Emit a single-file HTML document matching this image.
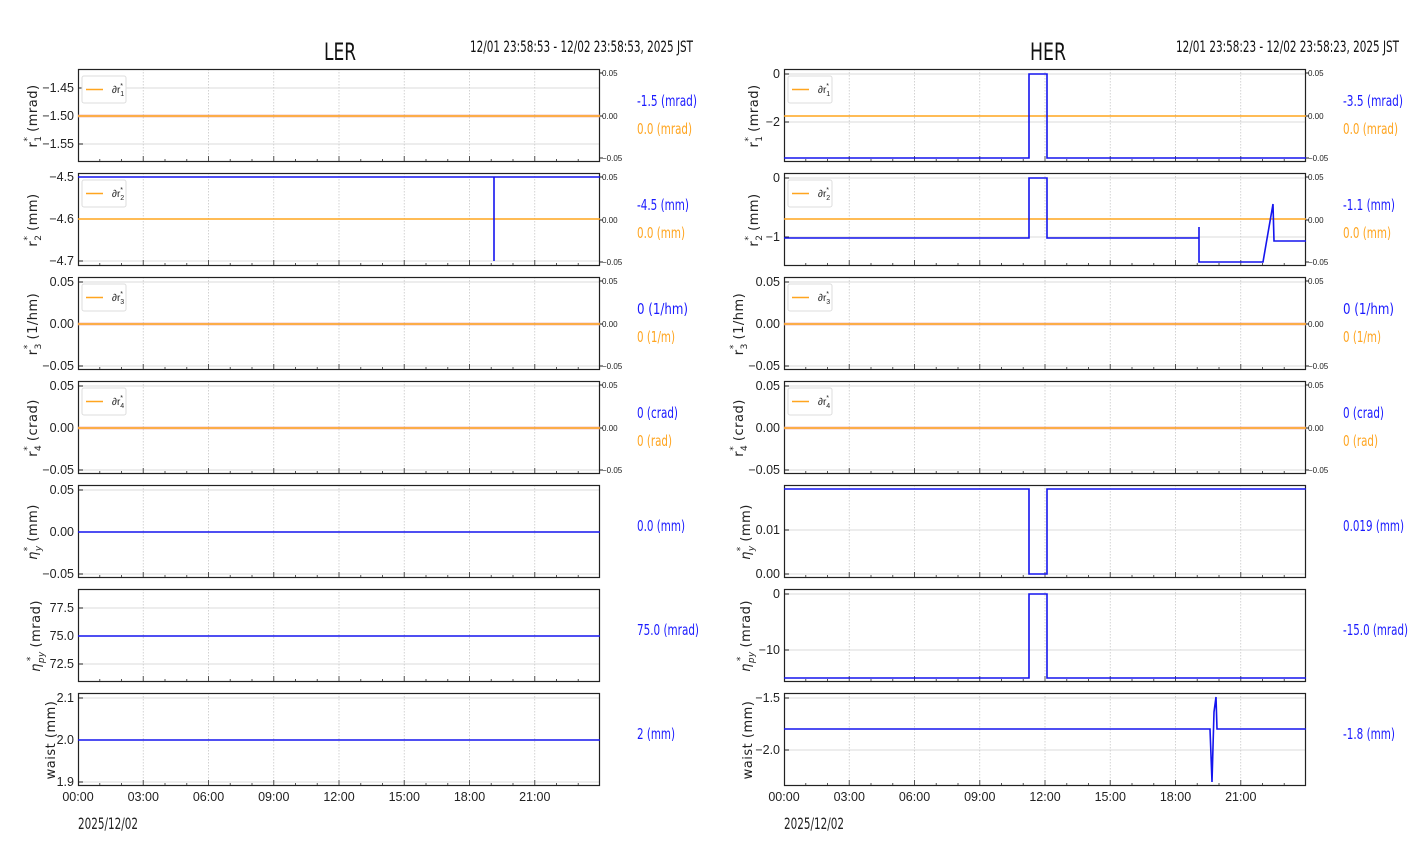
<!DOCTYPE html>
<html><head><meta charset="utf-8"><style>
html,body{margin:0;padding:0;background:#fff;}
svg{display:block;font-family:"DejaVu Sans","Liberation Sans",sans-serif;}
.t{font-size:12.5px;fill:#222;font-family:"Liberation Sans",sans-serif;}
.r{font-size:8px;fill:#222;font-family:"Liberation Sans",sans-serif;}
.yl{font-size:13px;fill:#222;letter-spacing:0.5px;}
.v{font-size:15px;}
.b{fill:#1a1aff;} .o{fill:#ffa520;}
.bl{stroke:#1515ee;stroke-width:1.6;fill:none;}
.ol{stroke:#ffa51f;stroke-width:1.6;fill:none;}
.hg{stroke:#cfcfcf;stroke-width:0.8;}
.lg{font-size:10px;fill:#222;font-family:"Liberation Sans",sans-serif;}
</style></head><body>
<svg width="1412" height="864" viewBox="0 0 1412 864" xmlns="http://www.w3.org/2000/svg">
<defs>
<g id="fr">
<path d="M65.25 0V93M130.5 0V93M195.75 0V93M261 0V93M326.25 0V93M391.5 0V93M456.75 0V93" stroke="#c8c8c8" stroke-width="0.8" stroke-dasharray="1.5,1.5"/>
<path d="M21.75 93v-3M43.5 93v-3M65.25 93v-6M87 93v-3M108.75 93v-3M130.5 93v-6M152.25 93v-3M174 93v-3M195.75 93v-6M217.5 93v-3M239.25 93v-3M261 93v-6M282.75 93v-3M304.5 93v-3M326.25 93v-6M348 93v-3M369.75 93v-3M391.5 93v-6M413.25 93v-3M435 93v-3M456.75 93v-6M478.5 93v-3M500.25 93v-3" stroke="#555" stroke-width="1"/>
<rect x="0.5" y="0.5" width="521" height="92" fill="none" stroke="#222" stroke-width="1.2"/>
</g>
<g id="ra">
<path d="M522 4h3M522 47h3M522 89h3" stroke="#222"/>
</g>
<g id="lgb"><rect x="4" y="7" width="44" height="27" rx="2" fill="#fff" stroke="#ddd"/><path d="M8 20.5h17" stroke="#ffa51f" stroke-width="1.6"/></g>
</defs>

<text x="324" y="60" font-size="24" fill="#111" textLength="32" lengthAdjust="spacingAndGlyphs">LER</text>
<text x="470" y="52" font-size="16" fill="#111" textLength="223" lengthAdjust="spacingAndGlyphs">12/01 23:58:53 - 12/02 23:58:53, 2025 JST</text>
<text x="1030" y="60" font-size="24" fill="#111" textLength="36" lengthAdjust="spacingAndGlyphs">HER</text>
<text x="1176" y="52" font-size="16" fill="#111" textLength="223" lengthAdjust="spacingAndGlyphs">12/01 23:58:23 - 12/02 23:58:23, 2025 JST</text>

<g>
<path class="hg" d="M78 88H600M78 116H600M78 144H600"/>
<use href="#fr" x="78" y="69"/><use href="#ra" x="78" y="69"/>
<path d="M78 88h5M78 116h5M78 144h5" stroke="#222"/>
<path d="M78 116H600" stroke="#e8a0a0" stroke-width="3" opacity="0.6"/>
<path class="ol" d="M78 116H600"/>
<text class="t" x="74" y="92" text-anchor="end">−1.45</text><text class="t" x="74" y="120" text-anchor="end">−1.50</text><text class="t" x="74" y="148" text-anchor="end">−1.55</text>
<text class="r" x="602" y="76">0.05</text><text class="r" x="602" y="119">0.00</text><text class="r" x="602" y="161">−0.05</text>
<use href="#lgb" x="78" y="69"/><text class="lg" x="112" y="93">∂r<tspan font-size="7" dy="3">1</tspan><tspan font-size="7" dx="-4" dy="-8">*</tspan></text>
<text class="yl" transform="translate(37 116) rotate(-90)" text-anchor="middle">r<tspan font-size="9" dy="4">1</tspan><tspan font-size="9" dx="-6" dy="-11">*</tspan><tspan dy="7"> (mrad)</tspan></text>
<text class="v b" x="637" y="106" textLength="60" lengthAdjust="spacingAndGlyphs">-1.5 (mrad)</text><text class="v o" x="637" y="134" textLength="55" lengthAdjust="spacingAndGlyphs">0.0 (mrad)</text>

<path class="hg" d="M78 177H600M78 219H600M78 261H600"/>
<use href="#fr" x="78" y="173"/><use href="#ra" x="78" y="173"/>
<path d="M78 177h5M78 219h5M78 261h5" stroke="#222"/>
<path class="ol" d="M78 219H600"/>
<path class="bl" d="M78 177H494V261V177H600"/>
<text class="t" x="74" y="181" text-anchor="end">−4.5</text><text class="t" x="74" y="223" text-anchor="end">−4.6</text><text class="t" x="74" y="265" text-anchor="end">−4.7</text>
<text class="r" x="602" y="180">0.05</text><text class="r" x="602" y="223">0.00</text><text class="r" x="602" y="265">−0.05</text>
<use href="#lgb" x="78" y="173"/><text class="lg" x="112" y="197">∂r<tspan font-size="7" dy="3">2</tspan><tspan font-size="7" dx="-4" dy="-8">*</tspan></text>
<text class="yl" transform="translate(37 220) rotate(-90)" text-anchor="middle">r<tspan font-size="9" dy="4">2</tspan><tspan font-size="9" dx="-6" dy="-11">*</tspan><tspan dy="7"> (mm)</tspan></text>
<text class="v b" x="637" y="210" textLength="52" lengthAdjust="spacingAndGlyphs">-4.5 (mm)</text><text class="v o" x="637" y="238" textLength="48" lengthAdjust="spacingAndGlyphs">0.0 (mm)</text>

<path class="hg" d="M78 282H600M78 324H600M78 366H600"/>
<use href="#fr" x="78" y="277"/><use href="#ra" x="78" y="277"/>
<path d="M78 282h5M78 324h5M78 366h5" stroke="#222"/>
<path d="M78 324H600" stroke="#e8a0a0" stroke-width="3" opacity="0.6"/><path class="ol" d="M78 324H600"/>
<text class="t" x="74" y="286" text-anchor="end">0.05</text><text class="t" x="74" y="328" text-anchor="end">0.00</text><text class="t" x="74" y="370" text-anchor="end">−0.05</text>
<text class="r" x="602" y="284">0.05</text><text class="r" x="602" y="327">0.00</text><text class="r" x="602" y="369">−0.05</text>
<use href="#lgb" x="78" y="277"/><text class="lg" x="112" y="301">∂r<tspan font-size="7" dy="3">3</tspan><tspan font-size="7" dx="-4" dy="-8">*</tspan></text>
<text class="yl" transform="translate(37 324) rotate(-90)" text-anchor="middle">r<tspan font-size="9" dy="4">3</tspan><tspan font-size="9" dx="-6" dy="-11">*</tspan><tspan dy="7"> (1/hm)</tspan></text>
<text class="v b" x="637" y="314" textLength="51" lengthAdjust="spacingAndGlyphs">0 (1/hm)</text><text class="v o" x="637" y="342" textLength="38" lengthAdjust="spacingAndGlyphs">0 (1/m)</text>

<path class="hg" d="M78 386H600M78 428H600M78 470H600"/>
<use href="#fr" x="78" y="381"/><use href="#ra" x="78" y="381"/>
<path d="M78 386h5M78 428h5M78 470h5" stroke="#222"/>
<path d="M78 428H600" stroke="#e8a0a0" stroke-width="3" opacity="0.6"/><path class="ol" d="M78 428H600"/>
<text class="t" x="74" y="390" text-anchor="end">0.05</text><text class="t" x="74" y="432" text-anchor="end">0.00</text><text class="t" x="74" y="474" text-anchor="end">−0.05</text>
<text class="r" x="602" y="388">0.05</text><text class="r" x="602" y="431">0.00</text><text class="r" x="602" y="473">−0.05</text>
<use href="#lgb" x="78" y="381"/><text class="lg" x="112" y="405">∂r<tspan font-size="7" dy="3">4</tspan><tspan font-size="7" dx="-4" dy="-8">*</tspan></text>
<text class="yl" transform="translate(37 428) rotate(-90)" text-anchor="middle">r<tspan font-size="9" dy="4">4</tspan><tspan font-size="9" dx="-6" dy="-11">*</tspan><tspan dy="7"> (crad)</tspan></text>
<text class="v b" x="637" y="418" textLength="41" lengthAdjust="spacingAndGlyphs">0 (crad)</text><text class="v o" x="637" y="446" textLength="35" lengthAdjust="spacingAndGlyphs">0 (rad)</text>

<path class="hg" d="M78 490H600M78 532H600M78 574H600"/>
<use href="#fr" x="78" y="485"/>
<path d="M78 490h5M78 532h5M78 574h5" stroke="#222"/>
<path class="bl" d="M78 532H600"/>
<text class="t" x="74" y="494" text-anchor="end">0.05</text><text class="t" x="74" y="536" text-anchor="end">0.00</text><text class="t" x="74" y="578" text-anchor="end">−0.05</text>
<text class="yl" transform="translate(37 532) rotate(-90)" text-anchor="middle"><tspan font-style="italic">η</tspan><tspan font-size="9" font-style="italic" dy="4">y</tspan><tspan font-size="9" dx="-6" dy="-11">*</tspan><tspan dy="7"> (mm)</tspan></text>
<text class="v b" x="637" y="531" textLength="48" lengthAdjust="spacingAndGlyphs">0.0 (mm)</text>

<path class="hg" d="M78 608H600M78 636H600M78 664H600"/>
<use href="#fr" x="78" y="589"/>
<path d="M78 608h5M78 636h5M78 664h5" stroke="#222"/>
<path class="bl" d="M78 636H600"/>
<text class="t" x="74" y="612" text-anchor="end">77.5</text><text class="t" x="74" y="640" text-anchor="end">75.0</text><text class="t" x="74" y="668" text-anchor="end">72.5</text>
<text class="yl" transform="translate(40 636) rotate(-90)" text-anchor="middle"><tspan font-style="italic">η</tspan><tspan font-size="9" font-style="italic" dy="4">py</tspan><tspan font-size="9" dx="-10" dy="-11">*</tspan><tspan dy="7" dx="4"> (mrad)</tspan></text>
<text class="v b" x="637" y="635" textLength="62" lengthAdjust="spacingAndGlyphs">75.0 (mrad)</text>

<path class="hg" d="M78 698H600M78 740H600M78 782H600"/>
<use href="#fr" x="78" y="693"/>
<path d="M78 698h5M78 740h5M78 782h5" stroke="#222"/>
<path class="bl" d="M78 740H600"/>
<text class="t" x="74" y="702" text-anchor="end">2.1</text><text class="t" x="74" y="744" text-anchor="end">2.0</text><text class="t" x="74" y="786" text-anchor="end">1.9</text>
<text class="yl" transform="translate(55 740) rotate(-90)" text-anchor="middle">waist (mm)</text>
<text class="v b" x="637" y="739" textLength="38" lengthAdjust="spacingAndGlyphs">2 (mm)</text>

<g class="t" text-anchor="middle">
<text x="78" y="801">00:00</text><text x="143.25" y="801">03:00</text><text x="208.5" y="801">06:00</text><text x="273.75" y="801">09:00</text><text x="339" y="801">12:00</text><text x="404.25" y="801">15:00</text><text x="469.5" y="801">18:00</text><text x="534.75" y="801">21:00</text>
</g>
<text x="78" y="829" font-size="16" fill="#222" textLength="60" lengthAdjust="spacingAndGlyphs">2025/12/02</text>
</g>

<g>
<path class="hg" d="M784 74H1306M784 122H1306"/>
<use href="#fr" x="784" y="69"/><use href="#ra" x="784" y="69"/>
<path d="M784 74h5M784 122h5" stroke="#222"/>
<path class="ol" d="M784 116H1306"/>
<path class="bl" d="M784 158H1029V74H1047V158H1306"/>
<text class="t" x="780" y="78" text-anchor="end">0</text><text class="t" x="780" y="126" text-anchor="end">−2</text>
<text class="r" x="1308" y="76">0.05</text><text class="r" x="1308" y="119">0.00</text><text class="r" x="1308" y="161">−0.05</text>
<use href="#lgb" x="784" y="69"/><text class="lg" x="818" y="93">∂r<tspan font-size="7" dy="3">1</tspan><tspan font-size="7" dx="-4" dy="-8">*</tspan></text>
<text class="yl" transform="translate(758 116) rotate(-90)" text-anchor="middle">r<tspan font-size="9" dy="4">1</tspan><tspan font-size="9" dx="-6" dy="-11">*</tspan><tspan dy="7"> (mrad)</tspan></text>
<text class="v b" x="1343" y="106" textLength="60" lengthAdjust="spacingAndGlyphs">-3.5 (mrad)</text><text class="v o" x="1343" y="134" textLength="55" lengthAdjust="spacingAndGlyphs">0.0 (mrad)</text>

<path class="hg" d="M784 178H1306M784 237H1306"/>
<use href="#fr" x="784" y="173"/><use href="#ra" x="784" y="173"/>
<path d="M784 178h5M784 237h5" stroke="#222"/>
<path class="ol" d="M784 219H1306"/>
<path class="bl" d="M784 238H1029V178H1047V238H1199V227V262H1263L1273 204L1274 241H1306"/>
<text class="t" x="780" y="182" text-anchor="end">0</text><text class="t" x="780" y="241" text-anchor="end">−1</text>
<text class="r" x="1308" y="180">0.05</text><text class="r" x="1308" y="223">0.00</text><text class="r" x="1308" y="265">−0.05</text>
<use href="#lgb" x="784" y="173"/><text class="lg" x="818" y="197">∂r<tspan font-size="7" dy="3">2</tspan><tspan font-size="7" dx="-4" dy="-8">*</tspan></text>
<text class="yl" transform="translate(758 220) rotate(-90)" text-anchor="middle">r<tspan font-size="9" dy="4">2</tspan><tspan font-size="9" dx="-6" dy="-11">*</tspan><tspan dy="7"> (mm)</tspan></text>
<text class="v b" x="1343" y="210" textLength="52" lengthAdjust="spacingAndGlyphs">-1.1 (mm)</text><text class="v o" x="1343" y="238" textLength="48" lengthAdjust="spacingAndGlyphs">0.0 (mm)</text>

<path class="hg" d="M784 282H1306M784 324H1306M784 366H1306"/>
<use href="#fr" x="784" y="277"/><use href="#ra" x="784" y="277"/>
<path d="M784 282h5M784 324h5M784 366h5" stroke="#222"/>
<path d="M784 324H1306" stroke="#e8a0a0" stroke-width="3" opacity="0.6"/><path class="ol" d="M784 324H1306"/>
<text class="t" x="780" y="286" text-anchor="end">0.05</text><text class="t" x="780" y="328" text-anchor="end">0.00</text><text class="t" x="780" y="370" text-anchor="end">−0.05</text>
<text class="r" x="1308" y="284">0.05</text><text class="r" x="1308" y="327">0.00</text><text class="r" x="1308" y="369">−0.05</text>
<use href="#lgb" x="784" y="277"/><text class="lg" x="818" y="301">∂r<tspan font-size="7" dy="3">3</tspan><tspan font-size="7" dx="-4" dy="-8">*</tspan></text>
<text class="yl" transform="translate(743 324) rotate(-90)" text-anchor="middle">r<tspan font-size="9" dy="4">3</tspan><tspan font-size="9" dx="-6" dy="-11">*</tspan><tspan dy="7"> (1/hm)</tspan></text>
<text class="v b" x="1343" y="314" textLength="51" lengthAdjust="spacingAndGlyphs">0 (1/hm)</text><text class="v o" x="1343" y="342" textLength="38" lengthAdjust="spacingAndGlyphs">0 (1/m)</text>

<path class="hg" d="M784 386H1306M784 428H1306M784 470H1306"/>
<use href="#fr" x="784" y="381"/><use href="#ra" x="784" y="381"/>
<path d="M784 386h5M784 428h5M784 470h5" stroke="#222"/>
<path d="M784 428H1306" stroke="#e8a0a0" stroke-width="3" opacity="0.6"/><path class="ol" d="M784 428H1306"/>
<text class="t" x="780" y="390" text-anchor="end">0.05</text><text class="t" x="780" y="432" text-anchor="end">0.00</text><text class="t" x="780" y="474" text-anchor="end">−0.05</text>
<text class="r" x="1308" y="388">0.05</text><text class="r" x="1308" y="431">0.00</text><text class="r" x="1308" y="473">−0.05</text>
<use href="#lgb" x="784" y="381"/><text class="lg" x="818" y="405">∂r<tspan font-size="7" dy="3">4</tspan><tspan font-size="7" dx="-4" dy="-8">*</tspan></text>
<text class="yl" transform="translate(743 428) rotate(-90)" text-anchor="middle">r<tspan font-size="9" dy="4">4</tspan><tspan font-size="9" dx="-6" dy="-11">*</tspan><tspan dy="7"> (crad)</tspan></text>
<text class="v b" x="1343" y="418" textLength="41" lengthAdjust="spacingAndGlyphs">0 (crad)</text><text class="v o" x="1343" y="446" textLength="35" lengthAdjust="spacingAndGlyphs">0 (rad)</text>

<path class="hg" d="M784 530H1306M784 574H1306"/>
<use href="#fr" x="784" y="485"/>
<path d="M784 530h5M784 574h5" stroke="#222"/>
<path class="bl" d="M784 489H1029V574H1047V489H1306"/>
<text class="t" x="780" y="534" text-anchor="end">0.01</text><text class="t" x="780" y="578" text-anchor="end">0.00</text>
<text class="yl" transform="translate(750 532) rotate(-90)" text-anchor="middle"><tspan font-style="italic">η</tspan><tspan font-size="9" font-style="italic" dy="4">y</tspan><tspan font-size="9" dx="-6" dy="-11">*</tspan><tspan dy="7"> (mm)</tspan></text>
<text class="v b" x="1343" y="531" textLength="61" lengthAdjust="spacingAndGlyphs">0.019 (mm)</text>

<path class="hg" d="M784 594H1306M784 650H1306"/>
<use href="#fr" x="784" y="589"/>
<path d="M784 594h5M784 650h5" stroke="#222"/>
<path class="bl" d="M784 678H1029V594H1047V678H1306"/>
<text class="t" x="780" y="598" text-anchor="end">0</text><text class="t" x="780" y="654" text-anchor="end">−10</text>
<text class="yl" transform="translate(750 636) rotate(-90)" text-anchor="middle"><tspan font-style="italic">η</tspan><tspan font-size="9" font-style="italic" dy="4">py</tspan><tspan font-size="9" dx="-10" dy="-11">*</tspan><tspan dy="7" dx="4"> (mrad)</tspan></text>
<text class="v b" x="1343" y="635" textLength="65" lengthAdjust="spacingAndGlyphs">-15.0 (mrad)</text>

<path class="hg" d="M784 698H1306M784 750H1306"/>
<use href="#fr" x="784" y="693"/>
<path d="M784 698h5M784 750h5" stroke="#222"/>
<path class="bl" d="M784 729H1210L1212 782L1214 712L1216 697L1217 729H1306"/>
<text class="t" x="780" y="702" text-anchor="end">−1.5</text><text class="t" x="780" y="754" text-anchor="end">−2.0</text>
<text class="yl" transform="translate(752 740) rotate(-90)" text-anchor="middle">waist (mm)</text>
<text class="v b" x="1343" y="739" textLength="52" lengthAdjust="spacingAndGlyphs">-1.8 (mm)</text>

<g class="t" text-anchor="middle">
<text x="784" y="801">00:00</text><text x="849.25" y="801">03:00</text><text x="914.5" y="801">06:00</text><text x="979.75" y="801">09:00</text><text x="1045" y="801">12:00</text><text x="1110.25" y="801">15:00</text><text x="1175.5" y="801">18:00</text><text x="1240.75" y="801">21:00</text>
</g>
<text x="784" y="829" font-size="16" fill="#222" textLength="60" lengthAdjust="spacingAndGlyphs">2025/12/02</text>
</g>
</svg>
</body></html>
